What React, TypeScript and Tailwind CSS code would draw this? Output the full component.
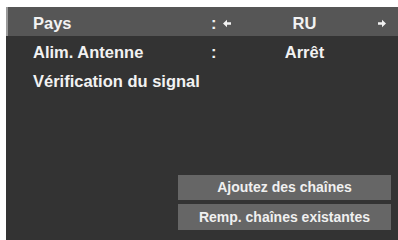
const font = { fontFamily: '"Liberation Sans", Arial, sans-serif' };

const Arrow = ({ dir }: { dir: "left" | "right" }) => (
  <svg
    width="9"
    height="9"
    viewBox="0 0 8 8"
    className={dir === "left" ? "rotate-180" : ""}
  >
    <path d="M0 2.8h4V0.3L8 4 4 7.7V5.2H0z" fill="#f2f2f2" />
  </svg>
);

const Row = ({
  label,
  value,
  arrows,
  active,
}: {
  label: string;
  value?: string;
  arrows?: boolean;
  active?: boolean;
}) => (
  <div
    className={`flex h-[29px] items-center pt-[3px] text-[16.5px] font-bold text-[#f2f2f2] ${
      active ? "bg-[#565656] border-l-2 border-[#9a9a9a] pl-[25px]" : "pl-[27px]"
    }`}
  >
    <span className="w-[178px] whitespace-nowrap">{label}</span>
    {value !== undefined && (
      <>
        <span className="w-[12px]">:</span>
        <span className="flex w-[8px] justify-center">
          {arrows && <Arrow dir="left" />}
        </span>
        <span className="flex-1 text-center">{value}</span>
        <span className="flex w-[8px] justify-center">
          {arrows && <Arrow dir="right" />}
        </span>
        <span className="w-[12px]" />
      </>
    )}
  </div>
);

export default function App() {
  return (
    <div className="h-[240px] w-[398px] bg-white pl-[6px] pt-[7px]" style={font}>
      <div className="flex h-[233px] flex-col bg-[#333333]">
        <div>
          <Row label="Pays" value="RU" arrows active />
          <Row label="Alim. Antenne" value="Arrêt" />
          <Row label="Vérification du signal" />
        </div>
        <div className="mt-auto mb-[10px] ml-[172px] mr-[7px] flex flex-col gap-[4px]">
          <button className="h-[25px] bg-[#666666] text-[14px] font-bold text-[#f0f0f0]">
            Ajoutez des chaînes
          </button>
          <button className="h-[26px] bg-[#666666] text-[14px] font-bold text-[#f0f0f0]">
            Remp. chaînes existantes
          </button>
        </div>
      </div>
    </div>
  );
}
